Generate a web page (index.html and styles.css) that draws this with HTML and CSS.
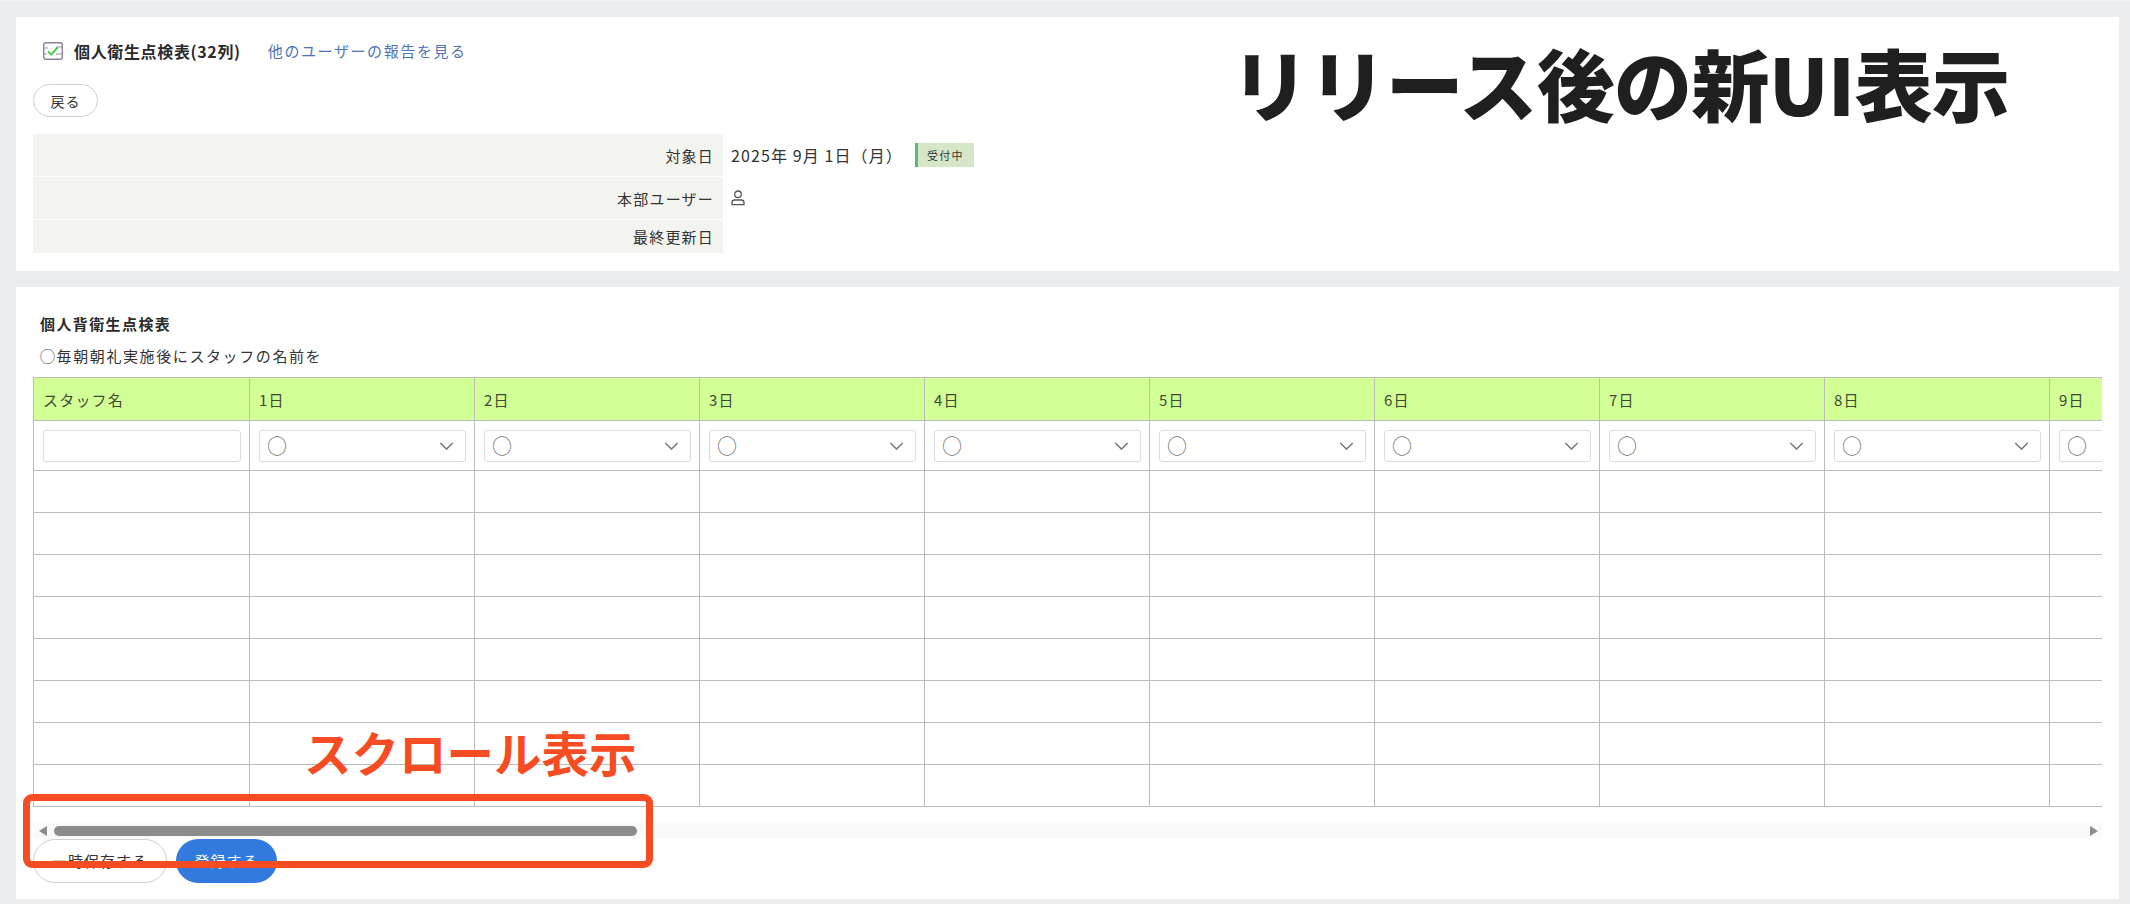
FILE: index.html
```html
<!DOCTYPE html>
<html lang="ja">
<head>
<meta charset="utf-8">
<title>個人衛生点検表</title>
<link rel="stylesheet" href="styles.css">
</head>
<body>
<main class="page">
  <section class="card card-top">
    <div class="title-row">
      <svg class="title-icon" viewBox="0 0 20 18" aria-hidden="true">
        <rect x="0.7" y="0.7" width="18.6" height="16.6" rx="2" fill="none" stroke="#8f8298" stroke-width="1.4"/>
        <path d="M1 6h4M1 12h3M13 5h6M13 12h6" stroke="#9a8fa3" stroke-width="1"/>
        <path d="M5 9.5l3.2 3 6.5-7" fill="none" stroke="#4fcf4f" stroke-width="2"/>
      </svg>
      <h1 class="title">個人衛生点検表(32列)</h1>
      <a class="title-link" href="#">他のユーザーの報告を見る</a>
    </div>
    <button class="pill pill-back" type="button">戻る</button>
    <dl class="info">
      <div class="info-row info-row-a">
        <dt>対象日</dt>
        <dd>
          <span class="date">2025年 9月 1日（月）</span>
          <span class="badge">受付中</span>
        </dd>
      </div>
      <div class="info-row info-row-b">
        <dt>本部ユーザー</dt>
        <dd>
          <svg class="person" viewBox="0 0 14 16" aria-hidden="true">
            <circle cx="7" cy="4.3" r="3.3" fill="none" stroke="#555" stroke-width="1.3"/>
            <path d="M1 14.6v-2a2.6 2.6 0 0 1 2.6-2.6h6.800a2.600 2.600 0 0 1 2.600 2.600v2z" fill="none" stroke="#555" stroke-width="1.3"/>
          </svg>
        </dd>
      </div>
      <div class="info-row info-row-c">
        <dt>最終更新日</dt>
        <dd></dd>
      </div>
    </dl>
  </section>

  <section class="card card-form">
    <h2 class="form-title">個人背衛生点検表</h2>
    <p class="form-note">◯毎朝朝礼実施後にスタッフの名前を</p>
    <div class="table-wrap">
      <table class="grid">
        <colgroup>
          <col class="col-name">
          <col class="col-day"><col class="col-day"><col class="col-day">
          <col class="col-day"><col class="col-day"><col class="col-day">
          <col class="col-day"><col class="col-day"><col class="col-day">
        </colgroup>
        <thead>
          <tr class="row-head">
            <th>スタッフ名</th><th>1日</th><th>2日</th><th>3日</th><th>4日</th><th>5日</th><th>6日</th><th>7日</th><th>8日</th><th>9日</th>
          </tr>
        </thead>
        <tbody>
          <tr class="row-input">
            <td><input class="name-input" type="text" aria-label="スタッフ名"></td>
            <td><div class="select"><span class="mark">○</span><svg class="chev" viewBox="0 0 16 9"><path d="M1 1l7 7 7-7"/></svg></div></td>
            <td><div class="select"><span class="mark">○</span><svg class="chev" viewBox="0 0 16 9"><path d="M1 1l7 7 7-7"/></svg></div></td>
            <td><div class="select"><span class="mark">○</span><svg class="chev" viewBox="0 0 16 9"><path d="M1 1l7 7 7-7"/></svg></div></td>
            <td><div class="select"><span class="mark">○</span><svg class="chev" viewBox="0 0 16 9"><path d="M1 1l7 7 7-7"/></svg></div></td>
            <td><div class="select"><span class="mark">○</span><svg class="chev" viewBox="0 0 16 9"><path d="M1 1l7 7 7-7"/></svg></div></td>
            <td><div class="select"><span class="mark">○</span><svg class="chev" viewBox="0 0 16 9"><path d="M1 1l7 7 7-7"/></svg></div></td>
            <td><div class="select"><span class="mark">○</span><svg class="chev" viewBox="0 0 16 9"><path d="M1 1l7 7 7-7"/></svg></div></td>
            <td><div class="select"><span class="mark">○</span><svg class="chev" viewBox="0 0 16 9"><path d="M1 1l7 7 7-7"/></svg></div></td>
            <td><div class="select"><span class="mark">○</span><svg class="chev" viewBox="0 0 16 9"><path d="M1 1l7 7 7-7"/></svg></div></td>
          </tr>
          <tr class="row-body"><td></td><td></td><td></td><td></td><td></td><td></td><td></td><td></td><td></td><td></td></tr>
          <tr class="row-body"><td></td><td></td><td></td><td></td><td></td><td></td><td></td><td></td><td></td><td></td></tr>
          <tr class="row-body"><td></td><td></td><td></td><td></td><td></td><td></td><td></td><td></td><td></td><td></td></tr>
          <tr class="row-body"><td></td><td></td><td></td><td></td><td></td><td></td><td></td><td></td><td></td><td></td></tr>
          <tr class="row-body"><td></td><td></td><td></td><td></td><td></td><td></td><td></td><td></td><td></td><td></td></tr>
          <tr class="row-body"><td></td><td></td><td></td><td></td><td></td><td></td><td></td><td></td><td></td><td></td></tr>
          <tr class="row-body"><td></td><td></td><td></td><td></td><td></td><td></td><td></td><td></td><td></td><td></td></tr>
          <tr class="row-body"><td></td><td></td><td></td><td></td><td></td><td></td><td></td><td></td><td></td><td></td></tr>
        </tbody>
      </table>
    </div>
    <div class="scrollbar">
      <svg class="arrow arrow-left" viewBox="0 0 8 10"><path d="M8 0v10L0 5z"/></svg>
      <div class="thumb"></div>
      <svg class="arrow arrow-right" viewBox="0 0 8 10"><path d="M0 0v10l8-5z"/></svg>
    </div>
    <div class="actions">
      <button class="pill pill-save" type="button">一時保存する</button>
      <button class="pill pill-submit" type="button">登録する</button>
    </div>
  </section>
</main>
<div class="note-headline">リリース後の新UI表示</div>
<div class="note-scroll">スクロール表示</div>
<div class="note-box"></div>
</body>
</html>
```

FILE: styles.css
```css
* { box-sizing: border-box; }
html, body { margin: 0; padding: 0; }
body {
  position: relative;
  width: 2130px;
  height: 904px;
  overflow: hidden;
  background: #ecedef;
  color: #333;
  font-family: "Noto Sans CJK JP", "Noto Sans", sans-serif;
  font-size: 15px;
}
.page {
  display: flex;
  flex-direction: column;
  gap: 16px;
  padding: 17px 11px 5px 16px;
  border-top: 1px solid #f3f4f5;
}
.card { background: #fff; padding-left: 17px; padding-right: 17px; }
.card-top { height: 254px; margin-top: -1px; padding-top: 24px; }
.card-form { height: 612px; padding-top: 26px; }

.title-row { display: flex; align-items: center; height: 20px; }
.title-icon { width: 20px; height: 18px; margin-left: 10px; margin-right: 11px; }
.title {
  margin: 0;
  font-size: 16px;
  font-weight: 700;
  letter-spacing: 0.65px;
  line-height: 20px;
  color: #2b2b2b;
}
.title-link {
  margin-left: 27px;
  color: #4f74b8;
  font-size: 15px;
  letter-spacing: 1.6px;
  text-decoration: none;
  line-height: 20px;
}

.pill {
  display: block;
  font-family: inherit;
  border-radius: 999px;
  border: 1px solid #cfcfcf;
  background: #fff;
  color: #333;
  padding: 0;
}
.pill-back { width: 65px; height: 33px; margin-top: 23px; font-size: 14px; letter-spacing: 1px; }

.info { margin: 17px 0 0; display: flex; flex-direction: column; gap: 1px; }
.info-row { display: flex; }
.info-row-a { height: 42px; }
.info-row-b { height: 42px; }
.info-row-c { height: 33px; }
.info dt {
  width: 690px;
  background: #f3f3ef;
  text-align: right;
  padding-right: 9px;
  letter-spacing: 1.2px;
  display: flex;
  align-items: center;
  justify-content: flex-end;
}
.info dd {
  margin: 0;
  padding-left: 8px;
  display: flex;
  align-items: center;
}
.date { font-size: 16px; letter-spacing: 1.1px; width: 184px; margin-top: -1px; }
.badge {
  width: 59px;
  height: 24px;
  background: #d6e7c9;
  border-left: 3px solid #5cb874;
  font-size: 11px;
  letter-spacing: 1.300px;
  line-height: 24px;
  padding-left: 9px;
}
.person { width: 14px; height: 16px; margin-left: 0; }

.form-title {
  margin: 0 0 0 7px;
  font-size: 15px;
  line-height: 22px;
  font-weight: 700;
  letter-spacing: 1.4px;
  color: #2b2b2b;
}
.form-note {
  margin: 10px 0 0 7px;
  font-size: 15px;
  line-height: 22px;
  letter-spacing: 1.6px;
}
.table-wrap { margin-top: 10px; width: 2069px; overflow: hidden; }
.grid {
  table-layout: fixed;
  width: 2242px;
  border-collapse: separate;
  border-spacing: 0;
  border-top: 1px solid #bcbcbc;
  border-left: 1px solid #bcbcbc;
}
.col-name { width: 216px; }
.col-day { width: 225px; }
.grid th, .grid td {
  border-right: 1px solid #bcbcbc;
  border-bottom: 1px solid #bcbcbc;
  padding: 0 8px 0 9px;
}
.grid th {
  background: #d3ff97;
  text-align: left;
  font-weight: 400;
  letter-spacing: 1.2px;
  color: #3d4a33;
}
.row-head { height: 43px; }
.row-input { height: 50px; }
.row-body { height: 42px; }
.name-input {
  display: block;
  width: 100%;
  height: 32px;
  border: 1px solid #dcdcdc;
  border-radius: 3px;
  background: #fff;
}
.select {
  display: flex;
  align-items: center;
  justify-content: space-between;
  height: 32px;
  padding: 0 11px 0 7px;
  border: 1px solid #dcdcdc;
  border-radius: 3px;
  background: #fff;
}
.mark { font-size: 20px; line-height: 30px; color: #777; }
.chev { width: 15px; height: 8px; fill: none; stroke: #777; stroke-width: 1.6; }

.scrollbar {
  display: flex;
  align-items: center;
  width: 2069px;
  height: 16px;
  margin-top: 16px;
  padding: 0 4px 0 6px;
  background: #fafafa;
}
.arrow { width: 8px; height: 10px; fill: #8c8c8c; }
.thumb {
  width: 583px;
  height: 10px;
  margin-left: 7px;
  border-radius: 5px;
  background: #8c8c8c;
}
.arrow-right { margin-left: auto; }

.actions { display: flex; gap: 9px; }
.pill-save { width: 134px; height: 44px; padding-bottom: 2px; font-size: 15px; letter-spacing: 1px; }
.pill-submit {
  width: 101px;
  height: 44px;
  padding-bottom: 2px;
  border: 0;
  background: #337ade;
  color: #fff;
  font-size: 15px;
  letter-spacing: 1px;
}

.note-headline {
  position: absolute;
  left: 1231px;
  top: 27px;
  font-size: 78px;
  letter-spacing: -0.6px;
  line-height: 110px;
  font-weight: 900;
  color: #1f1f1f;
  white-space: nowrap;
}
.note-scroll {
  position: absolute;
  left: 304px;
  top: 717px;
  font-size: 47.500px;
  line-height: 70px;
  font-weight: 700;
  color: #f54c23;
  white-space: nowrap;
}
.note-box {
  position: absolute;
  left: 23px;
  top: 794px;
  width: 630px;
  height: 74px;
  border: 7px solid #f54c23;
  border-radius: 9px;
}
```
